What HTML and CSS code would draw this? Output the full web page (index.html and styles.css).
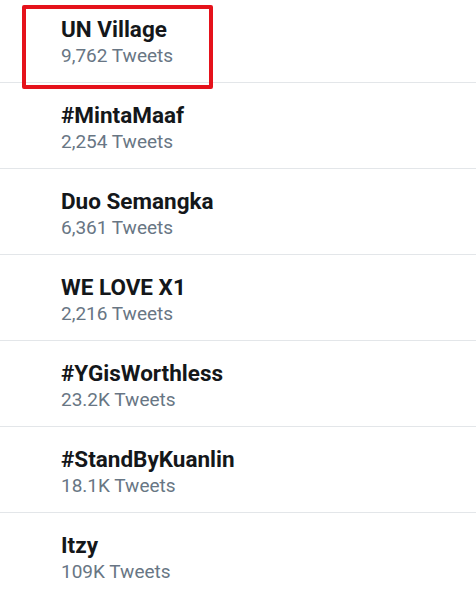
FILE: index.html
```html
<!DOCTYPE html>
<html>
<head>
<meta charset="utf-8">
<link rel="stylesheet" href="styles.css">
</head>
<body>
<ul class="trends">
  <li class="trend trend-highlight">
    <div class="trend-name">UN Village</div>
    <div class="trend-count">9,762 Tweets</div>
    <span class="highlight-box"></span>
  </li>
  <li class="trend">
    <div class="trend-name">#MintaMaaf</div>
    <div class="trend-count">2,254 Tweets</div>
  </li>
  <li class="trend">
    <div class="trend-name">Duo Semangka</div>
    <div class="trend-count">6,361 Tweets</div>
  </li>
  <li class="trend">
    <div class="trend-name">WE LOVE X1</div>
    <div class="trend-count">2,216 Tweets</div>
  </li>
  <li class="trend">
    <div class="trend-name">#YGisWorthless</div>
    <div class="trend-count">23.2K Tweets</div>
  </li>
  <li class="trend">
    <div class="trend-name">#StandByKuanlin</div>
    <div class="trend-count">18.1K Tweets</div>
  </li>
  <li class="trend">
    <div class="trend-name">Itzy</div>
    <div class="trend-count">109K Tweets</div>
  </li>
</ul>
</body>
</html>
```

FILE: styles.css
```css
html, body {
  margin: 0;
  padding: 0;
  background: #ffffff;
  font-family: Roboto, "Noto Sans", "Liberation Sans", sans-serif;
  overflow: hidden;
}

.trends {
  list-style: none;
  margin: -3px 0 0 0;
  padding: 0;
}

.trend {
  position: relative;
  padding: 20px 0 14px 61px;
  border-bottom: 1px solid #e3e6e9;
  display: flex;
  flex-direction: column;
}

.trend-name {
  font-size: 22.5px;
  line-height: 24px;
  font-weight: 700;
  color: #14171a;
}

.trend-count {
  margin-top: 3px;
  font-size: 19px;
  line-height: 24px;
  color: #687684;
}

.highlight-box {
  position: absolute;
  left: 22px;
  top: 8px;
  width: 191px;
  height: 84px;
  box-sizing: border-box;
  border: 4px solid #e5121b;
  border-radius: 2px;
  z-index: 2;
}
```
